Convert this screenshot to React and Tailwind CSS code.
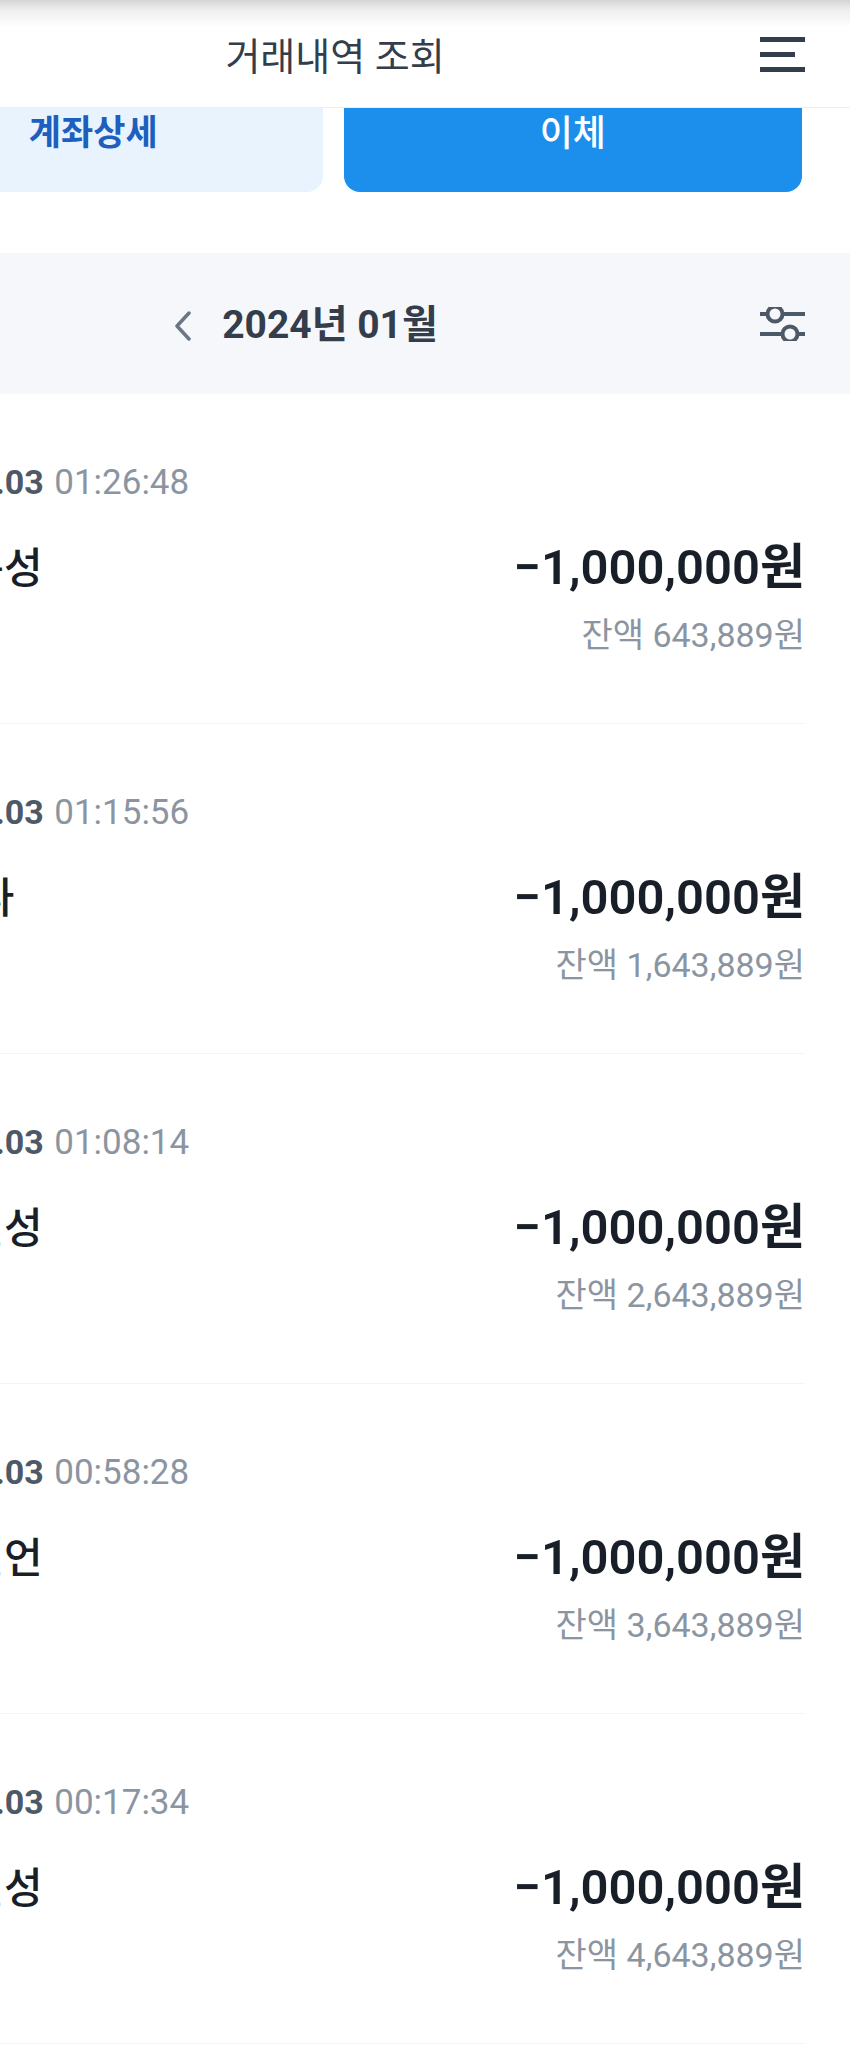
import React from "react";

const items = [
  { date: "2024.01.03", time: "01:26:48", name: "남궁문성", amount: "−1,000,000원", balance: "643,889원" },
  { date: "2024.01.03", time: "01:15:56", name: "김 하나", amount: "−1,000,000원", balance: "1,643,889원" },
  { date: "2024.01.03", time: "01:08:14", name: "선우민성", amount: "−1,000,000원", balance: "2,643,889원" },
  { date: "2024.01.03", time: "00:58:28", name: "황보민언", amount: "−1,000,000원", balance: "3,643,889원" },
  { date: "2024.01.03", time: "00:17:34", name: "제갈진성", amount: "−1,000,000원", balance: "4,643,889원" },
];

function MenuIcon() {
  return (
    <svg width="46" height="36" viewBox="0 0 46 36" fill="none">
      <rect x="0" y="1" width="45" height="5" fill="#333d4b" />
      <rect x="0" y="16" width="35" height="5" fill="#333d4b" />
      <rect x="0" y="31" width="45" height="5" fill="#333d4b" />
    </svg>
  );
}

function FilterIcon() {
  return (
    <svg width="46" height="34" viewBox="0 0 46 34" fill="none" stroke="#4e5968" strokeWidth="4">
      <line x1="0" y1="7" x2="45" y2="7" />
      <line x1="0" y1="27" x2="45" y2="27" />
      <circle cx="15" cy="7" r="7.5" fill="#f5f7fa" />
      <circle cx="30" cy="27" r="7.5" fill="#f5f7fa" />
    </svg>
  );
}

function Chevron() {
  return (
    <svg width="18" height="30" viewBox="0 0 18 30" fill="none">
      <path d="M15 2 L3 15 L15 28" stroke="#6b7684" strokeWidth="3.5" strokeLinecap="round" strokeLinejoin="round" />
    </svg>
  );
}

function Row({ item }) {
  return (
    <div className="mr-[45px] pt-[68px] pb-[68px] border-b border-[#f2f4f6]">
      <div className="h-[40px] overflow-visible text-[34px] leading-[40px] whitespace-nowrap">
        <span className="font-bold text-[#4e5968]">{item.date}</span>{" "}
        <span className="ml-[2px] text-[35px] text-[#8b95a1]">{item.time}</span>
      </div>
      <div className="mt-[38px] h-[56px] flex items-center justify-between">
        <span className="ml-5 text-[42px] font-medium text-[#191f28] whitespace-nowrap">{item.name}</span>
        <span className="text-[49px] leading-[56px] font-semibold text-[#191f28]">{item.amount}</span>
      </div>
      <div className="mt-[19px] h-[40px] text-right text-[34px] leading-[40px] text-[#8b95a1]">잔액 {item.balance}</div>
    </div>
  );
}

export default function App() {
  return (
    <div className="w-[850px] min-h-screen overflow-hidden bg-white font-['Roboto','Noto_Sans_CJK_KR',sans-serif]">
      <div className="w-[1034px] -ml-[184px]">
        <header className="relative z-10 h-[108px] grid grid-cols-[1fr_auto_1fr] items-center pl-12 pr-[44px] border-b border-[#eceef1] bg-[linear-gradient(to_bottom,#d4d4d4_0px,#efefef_10px,#ffffff_28px)]">
          <div />
          <h1 className="text-[38px] font-normal text-[#333d4b] pt-2">거래내역 조회</h1>
          <div className="justify-self-end flex">
            <MenuIcon />
          </div>
        </header>

        <div className="-mt-[32px] grid grid-cols-2 gap-[21px] px-12">
          <button className="h-[116px] rounded-[16px] bg-[#e8f3fe] text-[35px] font-bold text-[#1d5fbf]">계좌상세</button>
          <button className="h-[116px] rounded-[16px] bg-[#1b8feb] text-[36px] font-medium text-white">이체</button>
        </div>

        <div className="mt-[61px] h-[141px] bg-[#f5f7fa] grid grid-cols-[1fr_auto_1fr] items-center pl-12 pr-[44px]">
          <div />
          <div className="flex items-center gap-[30px] pt-1">
            <Chevron />
            <span className="text-[39px] font-bold text-[#333d4b] leading-none">2024년 01월</span>
            <div className="w-[28px]" />
          </div>
          <div className="justify-self-end flex">
            <FilterIcon />
          </div>
        </div>

        <div className="pl-[52px]">
          {items.map((item) => (
            <Row key={item.time} item={item} />
          ))}
        </div>
      </div>
    </div>
  );
}
